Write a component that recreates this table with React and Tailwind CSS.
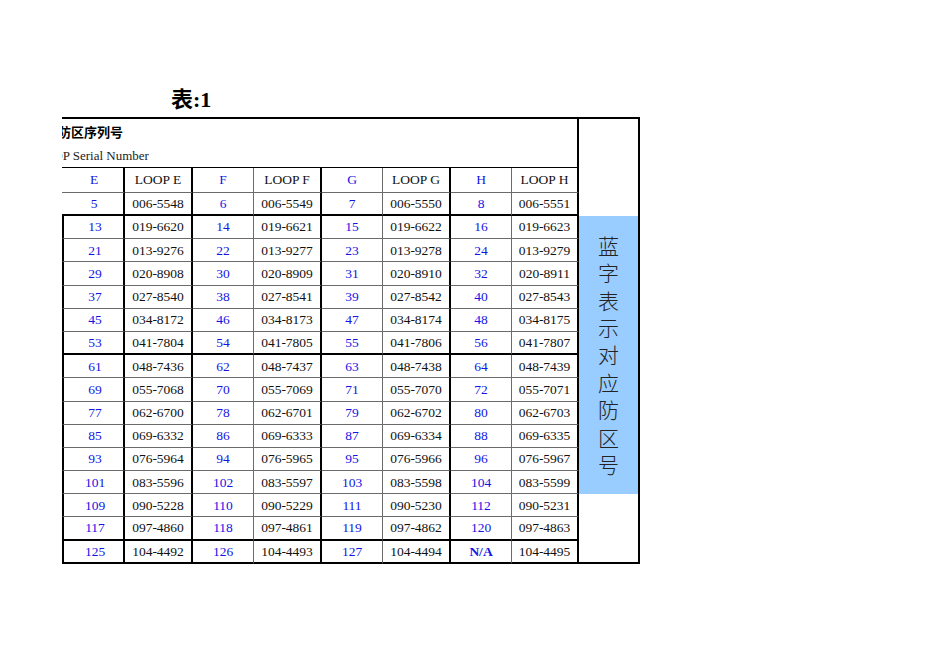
const rows = [
  [13, "019-6620", 14, "019-6621", 15, "019-6622", 16, "019-6623"],
  [21, "013-9276", 22, "013-9277", 23, "013-9278", 24, "013-9279"],
  [29, "020-8908", 30, "020-8909", 31, "020-8910", 32, "020-8911"],
  [37, "027-8540", 38, "027-8541", 39, "027-8542", 40, "027-8543"],
  [45, "034-8172", 46, "034-8173", 47, "034-8174", 48, "034-8175"],
  [53, "041-7804", 54, "041-7805", 55, "041-7806", 56, "041-7807"],
  [61, "048-7436", 62, "048-7437", 63, "048-7438", 64, "048-7439"],
  [69, "055-7068", 70, "055-7069", 71, "055-7070", 72, "055-7071"],
  [77, "062-6700", 78, "062-6701", 79, "062-6702", 80, "062-6703"],
  [85, "069-6332", 86, "069-6333", 87, "069-6334", 88, "069-6335"],
  [93, "076-5964", 94, "076-5965", 95, "076-5966", 96, "076-5967"],
  [101, "083-5596", 102, "083-5597", 103, "083-5598", 104, "083-5599"],
  [109, "090-5228", 110, "090-5229", 111, "090-5230", 112, "090-5231"],
  [117, "097-4860", 118, "097-4861", 119, "097-4862", 120, "097-4863"],
  [125, "104-4492", 126, "104-4493", 127, "104-4494", "N/A", "104-4495"],
];

// right border style per column (0..7)
const rightBorder = [
  "border-r-2 border-r-black pl-[3px]",
  "border-r-2 border-r-black",
  "border-r border-r-[#6b6b6b]",
  "border-r-2 border-r-black",
  "border-r border-r-[#6b6b6b]",
  "border-r-2 border-r-black",
  "border-r border-r-[#6b6b6b]",
  "border-r-2 border-r-black",
];

function Cell({ col, bottom, left, children, blue, bold }) {
  return (
    <div
      className={`flex items-center justify-center overflow-hidden pt-[1px] ${rightBorder[col]} ${bottom} ${
        left ? "border-l-2 border-l-black" : ""
      } ${blue ? "text-[#1414e6]" : "text-[#111]"} ${bold ? "font-bold" : ""}`}
    >
      {children}
    </div>
  );
}

export default function App() {
  const thickRows = [5, 13, 14];
  return (
    <div className="w-[950px] h-[672px] bg-white pt-[87px] font-['Liberation_Serif','Noto_Sans_CJK_SC',serif] text-[13.5px]">
      <div className="pl-[171px] h-[30px] text-[22px] leading-[26px] font-bold text-black">表:1</div>
      <div className="ml-[62px] w-[578px] border-t-2 border-t-black grid grid-cols-[63px_68px_61px_68px_61px_68px_61px_67px_61px] grid-rows-[49px_25px_23px_repeat(15,23.2px)]">
        {/* header block */}
        <div className="col-span-8 border-r-2 border-r-black border-b border-b-black overflow-hidden">
          <div className="ml-[-4px] pt-[5px] leading-[16px] font-bold font-['Noto_Sans_CJK_SC',sans-serif] text-[13px] text-black">
            防区序列号
          </div>
          <div className="ml-[-26px] mt-[8px] leading-[16px] whitespace-nowrap text-[13px] text-[#222]">LOOP Serial Number</div>
        </div>
        <div className="col-start-9 row-start-1 row-span-3 border-r-2 border-r-black" />

        {/* column header row */}
        {["E", "LOOP E", "F", "LOOP F", "G", "LOOP G", "H", "LOOP H"].map((t, i) => (
          <Cell key={t} col={i} bottom="border-b border-b-[#6b6b6b]" blue={i % 2 === 0}>
            {t}
          </Cell>
        ))}

        {/* row 5 */}
        {[5, "006-5548", 6, "006-5549", 7, "006-5550", 8, "006-5551"].map((t, i) => (
          <Cell key={"r5-" + i} col={i} bottom="border-b-2 border-b-black" blue={i % 2 === 0}>
            {t}
          </Cell>
        ))}

        {/* body rows */}
        {rows.map((r, ri) =>
          r.map((t, i) => (
            <Cell
              key={ri + "-" + i}
              col={i}
              left={i === 0}
              bottom={thickRows.includes(ri) ? "border-b-2 border-b-black" : "border-b border-b-[#6b6b6b]"}
              blue={i % 2 === 0}
              bold={t === "N/A"}
            >
              {t}
            </Cell>
          ))
        )}

        {/* blue column */}
        <div className="col-start-9 row-start-4 row-span-12 border-r-2 border-r-black bg-[#99ccff] flex flex-col items-center justify-center text-[21px] leading-[27.4px] text-[#222] font-['Noto_Sans_CJK_SC',sans-serif] font-light">
          {"蓝字表示对应防区号".split("").map((c, i) => (
            <span key={i} className="block h-[27.4px]">{c}</span>
          ))}
        </div>
        <div className="col-start-9 row-start-16 row-span-3 border-r-2 border-r-black border-b-2 border-b-black" />
      </div>
    </div>
  );
}
